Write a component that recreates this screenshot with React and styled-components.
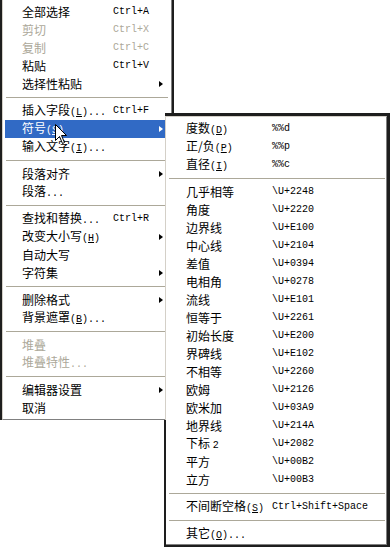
import React from 'react';
import styled, { createGlobalStyle } from 'styled-components';

const DARK = '#1e1e1e';

const Global = createGlobalStyle`
  html, body { margin: 0; padding: 0; background: #fff; }
  body { font-family: "Noto Sans CJK SC", sans-serif; font-size: 12px; color: #000; }
`;

const Page = styled.div`
  position: relative;
  width: 392px;
  height: 549px;
  overflow: hidden;
  background: #fff;
`;

const MainMenu = styled.div`
  box-sizing: border-box;
  margin-left: 2px;
  width: 170px;
  height: 420px;
  padding: 3px 1px 2px 2px;
  border-left: 1px solid #d4d0c8;
  border-right: 1px solid #808080;
  border-bottom: 1px solid #808080;
  background: #fff;
  box-shadow: -2px 0 0 ${DARK}, 2px 0 0 ${DARK};
  display: flex;
  flex-direction: column;
`;

const SubMenu = styled.div`
  position: absolute;
  left: 165px;
  top: 116px;
  box-sizing: border-box;
  width: 222px;
  height: 429px;
  padding: 3px 1px 1px 2px;
  border-top: 1px solid #d4d0c8;
  border-left: 1px solid #d4d0c8;
  border-right: 1px solid #808080;
  border-bottom: 1px solid #808080;
  background: #fff;
  box-shadow: 0 -3px 0 ${DARK}, 3px 0 0 ${DARK}, 0 2px 0 ${DARK}, 3px 2px 0 ${DARK}, 3px -3px 0 ${DARK};
  display: flex;
  flex-direction: column;
  &::before {
    content: '';
    position: absolute;
    left: -2px;
    top: 303px;
    bottom: -3px;
    width: 2px;
    background: ${DARK};
  }
`;

const Item = styled.div`
  height: 18px;
  flex: none;
  display: flex;
  align-items: center;
  padding-left: ${p => p.$indent}px;
  padding-right: 7px;
  background: ${p => (p.$active ? '#316ac5' : 'transparent')};
  color: ${p => (p.$active ? '#fff' : p.$disabled ? '#aca899' : '#000')};
  white-space: nowrap;
`;

const Label = styled.span`
  width: ${p => p.$w}px;
  flex: none;
  line-height: 18px;
`;

const Key = styled.span`
  flex: 1;
  font-family: "Liberation Mono", monospace;
  font-size: 10px;
  line-height: 18px;
`;

const Latin = styled.span`
  font-family: "Liberation Mono", monospace;
  font-size: 10px;
`;

const U = styled.span`
  text-decoration: underline;
`;

const Arrow = styled.span`
  width: 0;
  height: 0;
  border-top: 3.5px solid transparent;
  border-bottom: 3.5px solid transparent;
  border-left: 4px solid currentColor;
`;

const Sep = styled.div`
  height: 9px;
  flex: none;
  display: flex;
  align-items: center;
  padding: 0 ${p => p.$r}px 0 1px;
  &::after {
    content: '';
    flex: 1;
    height: 1px;
    background: #aca899;
  }
`;

const Cursor = styled.svg`
  position: absolute;
  left: 55px;
  top: 124px;
`;

const Mn = ({ c, rest = '' }) => (
  <Latin>(<U>{c}</U>){rest}</Latin>
);

const main = [
  { t: '全部选择', k: 'Ctrl+A' },
  { t: '剪切', k: 'Ctrl+X', d: true },
  { t: '复制', k: 'Ctrl+C', d: true },
  { t: '粘贴', k: 'Ctrl+V' },
  { t: '选择性粘贴', sub: true },
  'sep',
  { t: '插入字段', m: 'L', r: '...', k: 'Ctrl+F' },
  { t: '符号', m: 'S', sub: true, active: true },
  { t: '输入文字', m: 'I', r: '...' },
  'sep',
  { t: '段落对齐', sub: true },
  { t: '段落', r: '...' },
  'sep',
  { t: '查找和替换', r: '...', k: 'Ctrl+R' },
  { t: '改变大小写', m: 'H', sub: true },
  { t: '自动大写' },
  { t: '字符集', sub: true },
  'sep',
  { t: '删除格式', sub: true },
  { t: '背景遮罩', m: 'B', r: '...' },
  'sep',
  { t: '堆叠', d: true },
  { t: '堆叠特性', r: '...', d: true },
  'sep',
  { t: '编辑器设置', sub: true },
  { t: '取消' },
];

const sub = [
  { t: '度数', m: 'D', k: '%%d' },
  { t: '正/负', m: 'P', k: '%%p' },
  { t: '直径', m: 'I', k: '%%c' },
  'sep',
  { t: '几乎相等', k: '\\U+2248' },
  { t: '角度', k: '\\U+2220' },
  { t: '边界线', k: '\\U+E100' },
  { t: '中心线', k: '\\U+2104' },
  { t: '差值', k: '\\U+0394' },
  { t: '电相角', k: '\\U+0278' },
  { t: '流线', k: '\\U+E101' },
  { t: '恒等于', k: '\\U+2261' },
  { t: '初始长度', k: '\\U+E200' },
  { t: '界碑线', k: '\\U+E102' },
  { t: '不相等', k: '\\U+2260' },
  { t: '欧姆', k: '\\U+2126' },
  { t: '欧米加', k: '\\U+03A9' },
  { t: '地界线', k: '\\U+214A' },
  { t: '下标 ', n: '2', k: '\\U+2082' },
  { t: '平方', k: '\\U+00B2' },
  { t: '立方', k: '\\U+00B3' },
  'sep',
  { t: '不间断空格', m: 'S', k: 'Ctrl+Shift+Space' },
  'sep',
  { t: '其它', m: 'O', r: '...' },
];

const renderItems = (list, indent, labelW, sepR) =>
  list.map((it, i) =>
    it === 'sep' ? (
      <Sep key={i} $r={sepR} />
    ) : (
      <Item key={i} $indent={indent} $active={it.active} $disabled={it.d}>
        <Label $w={labelW}>
          {it.t}
          {it.n && <Latin>{it.n}</Latin>}
          {it.m ? <Mn c={it.m} rest={it.r} /> : it.r ? <Latin>{it.r}</Latin> : null}
        </Label>
        <Key>{it.k || ''}</Key>
        {it.sub && <Arrow />}
      </Item>
    )
  );

export default function App() {
  return (
    <Page>
      <Global />
      <MainMenu>{renderItems(main, 17, 91, 2)}</MainMenu>
      <SubMenu>{renderItems(sub, 18, 86, 0)}</SubMenu>
      <Cursor width="13" height="21" viewBox="0 0 13 21">
        <path d="M0.5 0.5 L0.5 16.5 L4.5 12.5 L7.5 19.5 L9.5 18.5 L6.5 11.5 L11.5 11.5 Z" fill="#fff" stroke="#000" strokeWidth="1" />
      </Cursor>
    </Page>
  );
}
